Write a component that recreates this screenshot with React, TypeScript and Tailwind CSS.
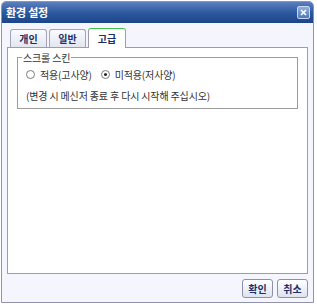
import React from 'react'

const font = { fontFamily: '"Noto Sans CJK KR", "Noto Sans", sans-serif' }

function Tab({ label, active }: { label: string; active?: boolean }) {
  if (active) {
    return (
      <div className="relative -mb-px flex h-[20px] w-[38px] items-center justify-center rounded-t-[3px] border border-b-0 border-[#9a9cb0] border-t-[#3fc24a] bg-white text-[10px] font-bold text-[#1d2f66]">
        {label}
      </div>
    )
  }
  return (
    <div className="flex h-[18px] w-[37px] items-center justify-center rounded-t-[3px] border border-b-0 border-[#a3a5b6] bg-gradient-to-b from-[#fafbff] to-[#e4e6f0] text-[10px] font-bold text-[#1d2f66]">
      {label}
    </div>
  )
}

function Radio({ checked, label }: { checked?: boolean; label: string }) {
  return (
    <div className="flex items-center gap-[5px]">
      <span className="flex h-[9px] w-[9px] items-center justify-center rounded-full border border-[#7a7a7a] bg-white">
        {checked && <span className="h-[3px] w-[3px] rounded-full bg-[#222]" />}
      </span>
      <span>{label}</span>
    </div>
  )
}

export default function App() {
  return (
    <div className="h-[306px] w-[317px] bg-white pl-[1px] pt-[1px]" style={font}>
      <div className="flex h-[302px] w-[313px] flex-col overflow-hidden rounded-t-[5px] border border-[#9092ae] bg-[#f5f6fd]">
        {/* Title bar */}
        <div className="flex h-[21px] shrink-0 items-center justify-between bg-gradient-to-b from-[#5c7fbe] via-[#2c59a0] to-[#1d4589] pl-[4px] pr-[3px]">
          <span className="text-[11px] font-bold tracking-[-0.2px] text-white">환경 설정</span>
          <div className="flex h-[13px] w-[13px] items-center justify-center rounded-[2px] border border-[#c8d6ee] bg-gradient-to-b from-[#8fb0e0] to-[#4f79bb]">
            <svg width="7" height="7" viewBox="0 0 7 7">
              <path d="M1 1 L6 6 M6 1 L1 6" stroke="white" strokeWidth="1.6" />
            </svg>
          </div>
        </div>

        {/* Tabs */}
        <div className="flex items-end gap-[2px] pl-[8px] pt-[5px]">
          <Tab label="개인" />
          <Tab label="일반" />
          <Tab label="고급" active />
        </div>

        {/* Panel */}
        <div className="mx-[5px] h-[227px] border border-[#9a9cb0] bg-white px-[9px] pt-[9px] text-[10px] tracking-[-0.15px] text-[#333]">
          <div className="relative h-[52px] border border-[#9c9c9c] px-[8px] pt-[9px]">
            <span className="absolute -top-[8px] left-[4px] bg-white px-[1px] text-[#333]">스크롤 스킨</span>
            <div className="flex items-center gap-[9px]">
              <Radio label="적용(고사양)" />
              <Radio label="미적용(저사양)" checked />
            </div>
            <div className="mt-[6px]">(변경 시 메신저 종료 후 다시 시작해 주십시오)</div>
          </div>
        </div>

        {/* Buttons */}
        <div className="flex justify-end gap-[4px] pr-[5px] pt-[5px]">
          {['확인', '취소'].map((b) => (
            <div
              key={b}
              className="flex h-[19px] w-[31px] items-center justify-center rounded-[3px] border border-[#8e90a8] bg-gradient-to-b from-[#ffffff] to-[#dfe3f0] text-[10px] font-bold text-[#1d2f66]"
            >
              {b}
            </div>
          ))}
        </div>
      </div>
    </div>
  )
}
